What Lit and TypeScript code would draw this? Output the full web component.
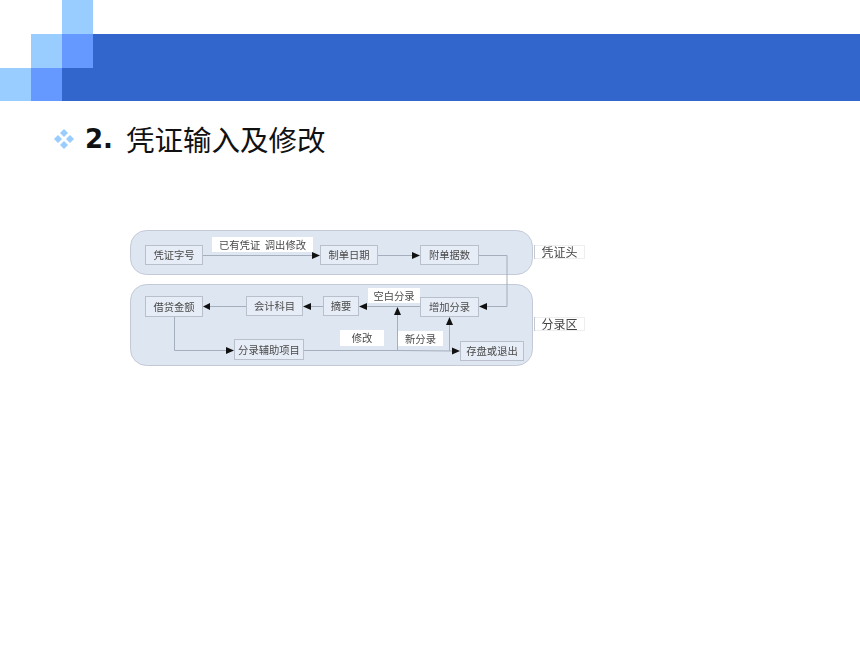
import { LitElement, html, css, svg } from "lit";
import { customElement } from "lit/decorators.js";

type Box = [number, number, number, number, string];

const NODES: Box[] = [
  [145, 245, 58, 20, "凭证字号"],
  [320, 245, 58, 20, "制单日期"],
  [420, 245, 59, 20, "附单据数"],
  [145, 296, 58, 21, "借贷金额"],
  [246, 296, 57, 20, "会计科目"],
  [323, 296, 36, 20, "摘要"],
  [420, 297, 59, 20, "增加分录"],
  [234, 339, 70, 21, "分录辅助项目"],
  [460, 341, 64, 20, "存盘或退出"],
];

const LABELS: Box[] = [
  [212, 237, 101, 15, "已有凭证  调出修改"],
  [368, 288, 52, 15, "空白分录"],
  [340, 330, 44, 16, "修改"],
  [398, 331, 45, 15, "新分录"],
];

const TAGS: Box[] = [
  [534, 245, 51, 14, "凭证头"],
  [534, 317, 51, 14, "分录区"],
];

const LINES = [
  "M203 255.5H314",
  "M378 255.5H414",
  "M479 255.5H507V306.5H485",
  "M420 306.5H366",
  "M323 306.5H310",
  "M246 306.5H209",
  "M174.5 317V350.5H228",
  "M304 350.5H397L454 351",
  "M397.5 350V314",
  "M449.5 351V323",
];

const ARROWS = [
  "M320 255.5L312 252V259Z",
  "M420 255.5L412 252V259Z",
  "M479 306.5L487 303V310Z",
  "M359 306.5L367 303V310Z",
  "M303 306.5L311 303V310Z",
  "M203 306.5L210 303V310Z",
  "M234 350.5L226 347V354Z",
  "M460 351L452 347.5V354.5Z",
  "M397.5 307L394 315H401Z",
  "M449.5 317L446 325H453Z",
];

@customElement("app-root")
export class AppRoot extends LitElement {
  static styles = css`
    :host {
      display: block;
      width: 860px;
      height: 645px;
      background: #fff;
      overflow: hidden;
    }
    .header {
      display: grid;
      grid-template-columns: 31px 31px 31px 1fr;
      grid-template-rows: 34px 34px 33px;
    }
    .light { background: #99ccff; }
    .mid { background: #6699ff; }
    .deep { background: #3366cc; }
    .top-light { grid-column: 3; grid-row: 1; }
    .row2-light { grid-column: 2; grid-row: 2; }
    .row2-mid { grid-column: 3; grid-row: 2; }
    .row2-deep { grid-column: 4; grid-row: 2; }
    .row3-light { grid-column: 1; grid-row: 3; }
    .row3-mid { grid-column: 2; grid-row: 3; }
    .row3-deep { grid-column: 3 / 5; grid-row: 3; }
    .title {
      display: flex;
      align-items: center;
      padding: 20px 0 0 53px;
      height: 36px;
      color: #111;
    }
    .bullet { width: 22px; height: 22px; flex: none; margin-right: 10px; }
    .bullet path { fill: #99ccff; }
    .num {
      font: bold 26px "DejaVu Sans", sans-serif;
      margin-right: 13px;
    }
    .cn {
      font: 28.5px "Noto Sans CJK SC", sans-serif;
      line-height: 36px;
    }
    .diagram {
      display: block;
      filter: blur(0.5px);
    }
    .panel { fill: #dde6f1; stroke: #c3c9d6; stroke-width: 1; }
    .node { fill: #e7edf7; stroke: #b9c0cc; stroke-width: 1; }
    .label { fill: #fff; }
    .tag { fill: #fff; stroke: #eceef0; stroke-width: 1; }
    .tag-edge { stroke: #c4c8cf; stroke-width: 1; fill: none; }
    .line { fill: none; stroke: #a4aebc; stroke-width: 1; }
    .arrow { fill: #111; }
    text {
      font-family: "Noto Sans CJK SC", sans-serif;
      font-size: 10.3px;
      fill: #4a4a4a;
      text-anchor: middle;
      dominant-baseline: central;
    }
    .tag-text { font-size: 12px; fill: #444; }
  `;

  private box(b: Box, cls: string, textCls = "") {
    const [x, y, w, h, t] = b;
    const inset = cls === "label" ? 0 : 0.5;
    const shrink = cls === "label" ? 0 : 1;
    return svg`<rect class=${cls} x=${x + inset} y=${y + inset} width=${w - shrink} height=${h - shrink}></rect>
      <text class=${textCls} x=${x + w / 2} y=${y + h / 2 - 0.5} xml:space="preserve">${t}</text>`;
  }

  render() {
    return html`
      <div class="header">
        <div class="light top-light"></div>
        <div class="light row2-light"></div>
        <div class="mid row2-mid"></div>
        <div class="deep row2-deep"></div>
        <div class="light row3-light"></div>
        <div class="mid row3-mid"></div>
        <div class="deep row3-deep"></div>
      </div>
      <div class="title">
        <svg class="bullet" viewBox="0 0 22 22">
          <path d="M11 1l4 4-4 4-4-4zM5 7l4 4-4 4-4-4zM17 7l4 4-4 4-4-4zM11 13l4 4-4 4-4-4z"></path>
        </svg>
        <span class="num">2.</span>
        <span class="cn">凭证输入及修改</span>
      </div>
      <svg class="diagram" width="860" height="508" viewBox="0 157 860 508">
        <rect class="panel" x="130.5" y="230.5" width="402" height="44" rx="16"></rect>
        <rect class="panel" x="130.5" y="284.5" width="402" height="81" rx="16"></rect>
        ${LINES.map((d) => svg`<path class="line" d=${d}></path>`)}
        ${LABELS.map((b) => this.box(b, "label"))}
        ${NODES.map((b) => this.box(b, "node"))}
        ${ARROWS.map((d) => svg`<path class="arrow" d=${d}></path>`)}
        ${TAGS.map((b) => svg`
          ${this.box(b, "tag", "tag-text")}
          <path class="tag-edge" d="M${b[0] + 0.5} ${b[1]}V${b[1] + b[3]}"></path>
        `)}
      </svg>
    `;
  }
}
